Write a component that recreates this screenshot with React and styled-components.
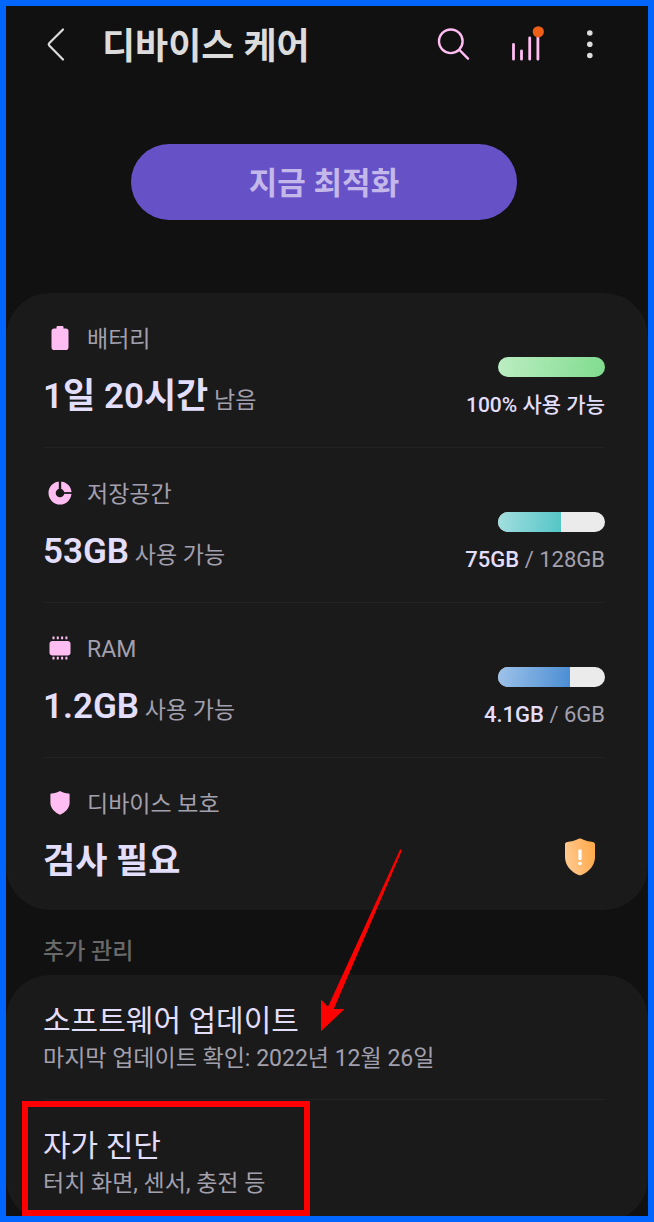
import React from 'react';
import styled, {createGlobalStyle, ThemeProvider} from 'styled-components';

const theme = {
  colors: {
    frame: '#0066ff',
    page: '#111111',
    card: '#1a1a1a',
    line: '#222222',
    title: '#dcdcdc',
    text: '#e2defc',
    sub: '#a3a0ae',
    heading: '#696969',
    pink: '#ffbdf2',
    primary: '#6651c6',
    primaryText: '#c4b8ea',
    mark: '#ff0000',
  },
};

const BatteryIcon = () => (
  <svg width="26" height="30" viewBox="0 0 26 30" fill="currentColor" aria-hidden="true">
    <path d="M10.5 1h5a1 1 0 0 1 1 1v1.500h2.200a2.800 2.800 0 0 1 2.800 2.800v15.900a2.800 2.800 0 0 1-2.800 2.800H7.300a2.800 2.800 0 0 1-2.800-2.800V6.300a2.800 2.800 0 0 1 2.800-2.800h2.200V2a1 1 0 0 1 1-1z" />
  </svg>
);

const StorageIcon = () => (
  <svg width="26" height="30" viewBox="0 0 26 30" aria-hidden="true">
    <circle cx="13" cy="13" r="7.900" fill="none" stroke="currentColor" strokeWidth="7.200" />
    <path d="M16 13h10" stroke="#1a1a1a" strokeWidth="1.800" />
    <path d="M13 0v10" stroke="#1a1a1a" strokeWidth="2.400" />
  </svg>
);

const RamIcon = () => (
  <svg width="26" height="30" viewBox="0 0 26 30" fill="currentColor" aria-hidden="true">
    <rect x="2.500" y="6" width="21" height="14.500" rx="3" />
    <path
      d="M6.500 1.500v2.800M10.800 1.500v2.800M15.100 1.500v2.800M19.400 1.500v2.800M6.500 21.800v2.800M10.800 21.800v2.800M15.100 21.800v2.800M19.400 21.800v2.800"
      stroke="currentColor"
      strokeWidth="2"
    />
  </svg>
);

const ShieldIcon = () => (
  <svg width="26" height="30" viewBox="0 0 26 30" fill="currentColor" aria-hidden="true">
    <path d="M13 1c2.600 1.700 5.600 2.300 8.400 2.400.8 0 1.200.5 1.200 1.200v8.200c0 5.400-4.300 9.700-9.600 12-5.300-2.300-9.600-6.600-9.600-12V4.600c0-.7.4-1.200 1.200-1.200C7.400 3.300 10.400 2.700 13 1z" />
  </svg>
);

const WarningShield = () => (
  <svg width="32" height="38" viewBox="0 0 32 38" role="img" aria-label="주의">
    <defs>
      <linearGradient id="warning" x1="0" y1="0.600" x2="1" y2="0.400">
        <stop offset="0" stopColor="#ffca91" />
        <stop offset="1" stopColor="#ffa94b" />
      </linearGradient>
    </defs>
    <path
      d="M16 .5c1.200 0 2.200.7 3.500 1.300 2.700 1.200 6 1.800 9 2.100 1.700.2 2.500.9 2.500 2.500V19c0 8.500-6.500 15.300-13.500 18a4 4 0 0 1-3 0C7.500 34.300 1 27.500 1 19V6.400c0-1.600.8-2.300 2.500-2.500 3-.3 6.300-.9 9-2.100C13.800 1.200 14.800.5 16 .5z"
      fill="url(#warning)"
    />
    <rect x="14.400" y="11.500" width="3.200" height="10.500" rx="1" fill="#fff" />
    <circle cx="16" cy="25.500" r="1.800" fill="#fff" />
  </svg>
);

const Arrow = () => (
  <ArrowSvg width="82" height="184" viewBox="0 0 82 184" aria-hidden="true">
    <path d="M79.200.3l1.800.9-68.200 158.900H23.500L0 182.300V150.500l7 7.200z" fill="#ff0000" />
  </ArrowSvg>
);

const devices = [
  {
    label: '배터리',
    icon: <BatteryIcon />,
    value: '1일 20시간',
    unit: '남음',
    percent: 100,
    colors: ['#bcedc3', '#80dc8e'],
    used: '100% 사용 가능',
  },
  {
    label: '저장공간',
    icon: <StorageIcon />,
    value: '53GB',
    unit: '사용 가능',
    percent: 59,
    colors: ['#a5dfe0', '#53c5c6'],
    used: '75GB',
    total: '128GB',
  },
  {
    label: 'RAM',
    icon: <RamIcon />,
    value: '1.2GB',
    unit: '사용 가능',
    percent: 67,
    colors: ['#9fc3ea', '#4a8dd3'],
    used: '4.1GB',
    total: '6GB',
  },
  {
    label: '디바이스 보호',
    icon: <ShieldIcon />,
    value: '검사 필요',
  },
];

const DeviceRow = ({item}) => (
  <Row>
    <div>
      <Label>
        {item.icon}
        {item.label}
      </Label>
      <Value>
        {item.value}
        {item.unit && <Unit> {item.unit}</Unit>}
      </Value>
    </div>
    {item.used ? (
      <Usage>
        <Bar>
          <BarFill $colors={item.colors} style={{width: `${item.percent}%`}} />
        </Bar>
        <UsageText $small={!item.total}>
          <strong>{item.used}</strong>
          {item.total && ` / ${item.total}`}
        </UsageText>
      </Usage>
    ) : (
      <Warning>
        <WarningShield />
      </Warning>
    )}
  </Row>
);

const App = () => {
  return (
    <ThemeProvider theme={theme}>
      <GlobalStyle />
      <Page>
        <Header>
          <IconButton type="button" aria-label="뒤로">
            <svg width="44" height="44" viewBox="0 0 44 44" fill="none" aria-hidden="true">
              <path
                d="M29 6.500L15.200 20.300a1.500 1.500 0 0 0 0 2.100L29 36.500"
                stroke="currentColor"
                strokeWidth="2.200"
                strokeLinecap="round"
              />
            </svg>
          </IconButton>
          <Title>디바이스 케어</Title>
          <Actions>
            <IconButton type="button" aria-label="검색" $pink>
              <svg width="44" height="44" viewBox="0 0 44 44" fill="none" aria-hidden="true">
                <g stroke="currentColor" strokeWidth="2.400" strokeLinecap="round">
                  <circle cx="18.800" cy="18.300" r="11.800" />
                  <path d="M27.500 27l8.500 8.700" />
                </g>
              </svg>
            </IconButton>
            <IconButton type="button" aria-label="사용 현황" $pink>
              <svg width="44" height="44" viewBox="0 0 44 44" fill="none" aria-hidden="true">
                <path
                  d="M13.500 21.500v14.700M21.500 28v8.200M29.700 15v21.200M37.900 12v24.200"
                  stroke="currentColor"
                  strokeWidth="2.800"
                  strokeLinecap="round"
                />
                <circle cx="38.300" cy="8.800" r="5.600" fill="#ee6018" />
              </svg>
            </IconButton>
            <IconButton type="button" aria-label="더보기">
              <svg width="44" height="44" viewBox="0 0 44 44" fill="currentColor" aria-hidden="true">
                <circle cx="21.800" cy="10" r="2.800" />
                <circle cx="21.800" cy="21.300" r="2.800" />
                <circle cx="21.800" cy="32.500" r="2.800" />
              </svg>
            </IconButton>
          </Actions>
        </Header>

        <Hero>
          <OptimizeButton type="button">지금 최적화</OptimizeButton>
        </Hero>

        <Card>
          {devices.map((item) => (
            <DeviceRow key={item.label} item={item} />
          ))}
        </Card>

        <Heading>추가 관리</Heading>

        <Card>
          <MenuRow>
            <MenuTitle>소프트웨어 업데이트</MenuTitle>
            <MenuText>마지막 업데이트 확인: 2022년 12월 26일</MenuText>
            <Arrow />
          </MenuRow>
          <MenuRow>
            <MenuTitle>자가 진단</MenuTitle>
            <MenuText>터치 화면, 센서, 충전 등</MenuText>
            <MarkBox />
          </MenuRow>
        </Card>
      </Page>
      <Frame />
    </ThemeProvider>
  );
};

export default App;

const GlobalStyle = createGlobalStyle`
  * {
    box-sizing: border-box;
  }

  body {
    margin: 0;
    background: #111111;
    font-family: Roboto, 'Noto Sans CJK KR', sans-serif;
  }

  h1, h2, h3, p {
    margin: 0;
  }

  svg {
    display: block;
    flex: none;
  }
`;

const Page = styled.main`
  min-height: 100vh;
  padding: 6px 6px 0;
  background: ${({theme}) => theme.colors.page};
`;

/* blue border that stays round the window */
const Frame = styled.div`
  position: fixed;
  inset: 0;
  border: 6px solid ${({theme}) => theme.colors.frame};
  pointer-events: none;
`;

const Header = styled.header`
  display: flex;
  align-items: center;
  height: 78px;
  padding: 0 36px 0 28px;
`;

const Title = styled.h1`
  flex: 1;
  margin-left: 24px;
  padding-top: 4px;
  color: ${({theme}) => theme.colors.title};
  font-size: 36px;
  font-weight: 600;
  line-height: 48px;
`;

const Actions = styled.div`
  display: flex;
  gap: 24px;
`;

const IconButton = styled.button`
  padding: 0;
  border: 0;
  background: none;
  color: ${({theme, $pink}) => ($pink ? theme.colors.pink : theme.colors.title)};
  cursor: pointer;
`;

const Hero = styled.div`
  display: flex;
  justify-content: center;
  padding: 60px 6px 73px 0;
`;

const OptimizeButton = styled.button`
  width: 386px;
  max-width: 90%;
  height: 76px;
  padding: 0 0 4px;
  border: 0;
  border-radius: 38px;
  background: ${({theme}) => theme.colors.primary};
  color: ${({theme}) => theme.colors.primaryText};
  font-family: inherit;
  font-size: 31px;
  font-weight: 600;
  cursor: pointer;
`;

const Card = styled.section`
  padding: 0 43px 0 37px;
  border-radius: 44px;
  background: ${({theme}) => theme.colors.card};
`;

const Row = styled.div`
  display: flex;
  justify-content: space-between;
  align-items: flex-end;
  padding: 31px 0 26px;

  &:not(:last-child) {
    border-bottom: 1px solid ${({theme}) => theme.colors.line};
  }

  &:last-child {
    padding-bottom: 24px;
  }
`;

const Label = styled.h2`
  display: flex;
  align-items: center;
  gap: 14px;
  margin: 0 0 17px 4px;
  color: ${({theme}) => theme.colors.sub};
  font-size: 23px;
  font-weight: 400;
  line-height: 32px;

  svg {
    color: ${({theme}) => theme.colors.pink};
  }
`;

const Value = styled.p`
  color: ${({theme}) => theme.colors.text};
  font-size: 35px;
  font-weight: 600;
  line-height: 48px;
`;

const Unit = styled.span`
  color: ${({theme}) => theme.colors.sub};
  font-size: 23px;
  font-weight: 400;
  line-height: 1;
`;

const Usage = styled.div`
  display: flex;
  flex-direction: column;
  align-items: flex-end;
  gap: 12px;
`;

const Bar = styled.div`
  width: 107px;
  height: 20px;
  overflow: hidden;
  border-radius: 10px;
  background: #ebebeb;
`;

const BarFill = styled.div`
  height: 100%;
  background: linear-gradient(100deg, ${({$colors}) => $colors.join(', ')});
`;

const UsageText = styled.p`
  color: ${({theme}) => theme.colors.sub};
  font-size: ${({$small}) => ($small ? 21 : 22)}px;
  line-height: 32px;

  strong {
    color: ${({theme}) => theme.colors.text};
    font-weight: 500;
  }
`;

const Warning = styled.div`
  padding: 0 9px 10px 0;
`;

const Heading = styled.h2`
  padding: 26px 37px 7px;
  color: ${({theme}) => theme.colors.heading};
  font-size: 23px;
  font-weight: 500;
  line-height: 32px;
`;

const MenuRow = styled.div`
  position: relative;
  padding: 26px 0 24px;

  &:not(:last-child) {
    border-bottom: 1px solid ${({theme}) => theme.colors.line};
  }

  &:last-child {
    padding-bottom: 22px;
  }
`;

const MenuTitle = styled.h3`
  margin-bottom: 2px;
  color: ${({theme}) => theme.colors.text};
  font-size: 30px;
  font-weight: 400;
  line-height: 40px;
`;

const MenuText = styled.p`
  color: ${({theme}) => theme.colors.sub};
  font-size: 23px;
  line-height: 32px;
`;

const ArrowSvg = styled.svg`
  position: absolute;
  top: -126px;
  left: 278px;
  pointer-events: none;
`;

const MarkBox = styled.div`
  position: absolute;
  top: 1px;
  left: -21px;
  width: 288px;
  height: 115px;
  border: 6px solid ${({theme}) => theme.colors.mark};
  pointer-events: none;
`;
